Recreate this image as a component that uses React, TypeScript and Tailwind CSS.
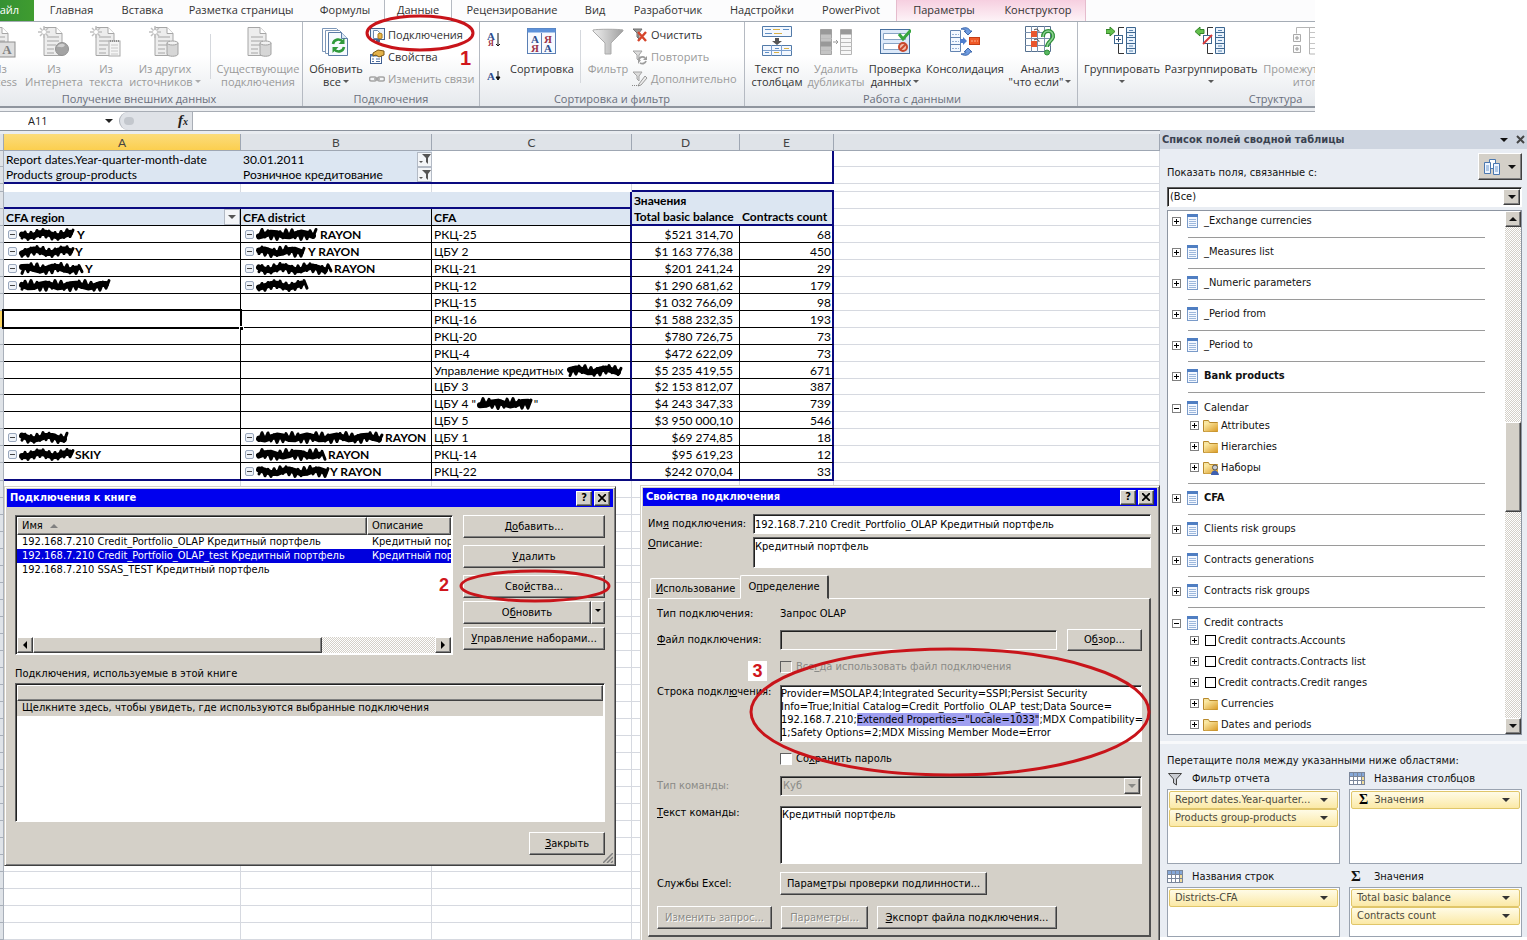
import type { ReactNode } from 'react'

const sources = [
  { kind: 'access', top: 'Из', bottom: 'Access', size: 'w-10 -ml-5' },
  { kind: 'web', top: 'Из', bottom: 'Интернета', size: 'w-[68px]' },
  { kind: 'text', top: 'Из', bottom: 'текста', size: 'w-9' },
  { kind: 'db', top: 'Из других', bottom: 'источников', size: 'w-[82px]', menu: true },
]

const tabs = [
  { name: 'Главная', size: 'w-[75px]' },
  { name: 'Вставка', size: 'w-[67px]' },
  { name: 'Разметка страницы', size: 'w-[130px]' },
  { name: 'Формулы', size: 'w-[78px]' },
  { name: 'Данные', size: 'w-[68px]', active: true },
  { name: 'Рецензирование', size: 'w-[120px]' },
  { name: 'Вид', size: 'w-[46px]' },
  { name: 'Разработчик', size: 'w-[100px]' },
  { name: 'Надстройки', size: 'w-[88px]' },
  { name: 'PowerPivot', size: 'w-[90px]' },
]

type Hidden = { ink: number; tail?: string }
type Row = { region?: Hidden; district?: Hidden; cfa: string; cfaInk?: number; cfaTail?: string; balance: string; count: number; selected?: boolean; short?: boolean }

const rows: Row[] = [
  { region: { ink: 56, tail: 'Y' }, district: { ink: 62, tail: 'RAYON' }, cfa: 'РКЦ-25', balance: '$521 314,70', count: 68 },
  { region: { ink: 54, tail: 'Y' }, district: { ink: 50, tail: 'Y RAYON' }, cfa: 'ЦБУ 2', balance: '$1 163 776,38', count: 450 },
  { region: { ink: 64, tail: 'Y' }, district: { ink: 76, tail: 'RAYON' }, cfa: 'РКЦ-21', balance: '$201 241,24', count: 29 },
  { region: { ink: 92 }, district: { ink: 52 }, cfa: 'РКЦ-12', balance: '$1 290 681,62', count: 179 },
  { cfa: 'РКЦ-15', balance: '$1 032 766,09', count: 98 },
  { cfa: 'РКЦ-16', balance: '$1 588 232,35', count: 193, selected: true },
  { cfa: 'РКЦ-20', balance: '$780 726,75', count: 73 },
  { cfa: 'РКЦ-4', balance: '$472 622,09', count: 73 },
  { cfa: 'Управление кредитных', cfaInk: 56, balance: '$5 235 419,55', count: 671 },
  { cfa: 'ЦБУ 3', balance: '$2 153 812,07', count: 387, short: true },
  { cfa: 'ЦБУ 4 "', cfaInk: 56, cfaTail: '"', balance: '$4 243 347,33', count: 739 },
  { cfa: 'ЦБУ 5', balance: '$3 950 000,10', count: 546 },
  { region: { ink: 50 }, district: { ink: 127, tail: 'RAYON' }, cfa: 'ЦБУ 1', balance: '$69 274,85', count: 18 },
  { region: { ink: 54, tail: 'SKIY' }, district: { ink: 70, tail: 'RAYON' }, cfa: 'РКЦ-14', balance: '$95 619,23', count: 12 },
  { district: { ink: 72, tail: 'Y RAYON' }, cfa: 'РКЦ-22', balance: '$242 070,04', count: 33 },
]

const fields = [
  { name: '_Exchange currencies' },
  { name: '_Measures list' },
  { name: '_Numeric parameters' },
  { name: '_Period from' },
  { name: '_Period to' },
  { name: 'Bank products', bold: true },
  {
    name: 'Calendar',
    children: [
      { name: 'Attributes', kind: 'folder' },
      { name: 'Hierarchies', kind: 'folder' },
      { name: 'Наборы', kind: 'sets' },
    ],
  },
  { name: 'CFA', bold: true },
  { name: 'Clients risk groups' },
  { name: 'Contracts generations' },
  { name: 'Contracts risk groups' },
  {
    name: 'Credit contracts',
    children: [
      { name: 'Credit contracts.Accounts', kind: 'check' },
      { name: 'Credit contracts.Contracts list', kind: 'check' },
      { name: 'Credit contracts.Credit ranges', kind: 'check' },
      { name: 'Currencies', kind: 'folder' },
      { name: 'Dates and periods', kind: 'folder' },
    ],
  },
]

const raised = 'bg-[#d4d0c8] border border-t-white border-l-white border-r-[#404040] border-b-[#404040] shadow-[inset_-1px_-1px_0_#808080]'
const sunken = 'border border-t-[#606060] border-l-[#606060] border-r-white border-b-white shadow-[inset_1px_1px_0_#202020]'

function Caret({ className = '', small }: { className?: string; small?: boolean }) {
  return (
    <svg viewBox="0 0 8 4" className={`inline-block shrink-0 ${small ? 'h-[3px] w-1.5' : 'h-1 w-2'} ${className}`} fill="currentColor">
      <path d="M0 0h8L4 4z" />
    </svg>
  )
}

/* ---------- ribbon icons ---------- */

function SourceIcon({ kind }: { kind: string }) {
  return (
    <svg viewBox="0 0 32 32" className="h-8 w-8" fill="none">
      <path d="M6 1.500h12l6 6V29.500H6z" fill="#ededed" stroke="#a6a6a6" />
      <path d="M18 1.500v6h6" stroke="#a6a6a6" fill="#fff" />
      <path d="M9 11h12M9 15h12M9 19h9M9 23h7M9 27h7" stroke="#bdbdbd" strokeWidth="1.500" />
      {kind !== 'existing' && (
        <>
          <path d="M6 0v12M0 6h12M2 2l8 8M10 2l-8 8" stroke="#c0c0c0" strokeWidth="1.500" />
          <circle cx="6" cy="6" r="2" fill="#fff" />
        </>
      )}
      {kind === 'access' && (
        <>
          <rect x="15" y="16" width="16" height="15" fill="#dedede" stroke="#8f8f8f" />
          <text x="23" y="28" textAnchor="middle" fontSize="13" fontWeight="700" fontFamily="Liberation Serif" fill="#808080">A</text>
        </>
      )}
      {kind === 'web' && (
        <>
          <circle cx="24" cy="23" r="6.500" fill="#a3a3a3" stroke="#919191" />
          <path d="M19 21c2-4 6-4 8-2-2 4-5 1-8 2z" fill="#cfcfcf" />
        </>
      )}
      {kind === 'text' && (
        <>
          <rect x="19" y="15" width="11" height="15" fill="#f5f5f5" stroke="#a8a8a8" />
          <path d="M20 15h10" stroke="#8e8e8e" strokeWidth="2" strokeDasharray="1 1" />
          <path d="M21 19h7M21 22h7M21 25h7M21 28h7" stroke="#c8c8c8" />
        </>
      )}
      {(kind === 'db' || kind === 'existing') && (
        <>
          <path d="M18 17v11c0 3 11 3 11 0V17z" fill="#d6d6d6" stroke="#a2a2a2" />
          <ellipse cx="23.500" cy="17" rx="5.500" ry="2" fill="#f2f2f2" stroke="#a2a2a2" />
        </>
      )}
    </svg>
  )
}

function RefreshIcon() {
  return (
    <svg viewBox="0 0 32 32" className="h-8 w-8" fill="none">
      <path d="M2.500 2.500h14l3 3v20h-17z" fill="#fff" stroke="#7d97b8" />
      <path d="M5.500 4.500h14l3 3v20h-17z" fill="#fff" stroke="#7d97b8" />
      <path d="M8.500 6.500h13l6 6v17h-19z" fill="#f6faff" stroke="#5b7ca6" />
      <path d="M21.500 6.500v6h6" fill="#dce8f6" stroke="#5b7ca6" />
      <path d="M13 18c1-5 7-6 10-2" stroke="#2f9a3b" strokeWidth="2.600" />
      <path d="M24.500 12v6h-6z" fill="#2f9a3b" />
      <path d="M24 21c-1 5-7 6-10 2" stroke="#2f9a3b" strokeWidth="2.600" />
      <path d="M12.500 27v-6h6z" fill="#2f9a3b" />
    </svg>
  )
}

function SmallIcon({ kind }: { kind: string }) {
  return (
    <svg viewBox="0 0 16 16" className="h-4 w-4 shrink-0" fill="none">
      {kind === 'connections' && (
        <>
          <rect x="1.500" y="1.500" width="14" height="11" fill="#e9f1fb" stroke="#47658f" />
          <path d="M4.500 3.500h4l2 2v6h-6z" fill="#fff" stroke="#6c88ad" />
          <path d="M9 7v4c0 1 4 1 4 0V7c0-1-4-1-4 0z" fill="#e9b84a" stroke="#a87718" />
          <path d="M7 13h4v2H7z" fill="#47658f" />
        </>
      )}
      {kind === 'properties' && (
        <>
          <rect x="1.500" y="5.500" width="11" height="9" fill="#fff" stroke="#3f5f92" />
          <rect x="1.500" y="5.500" width="11" height="2" fill="#4f7fc0" />
          <path d="M3 10h2M7 10h4M3 12.500h2M7 12.500h4" stroke="#4f6fa0" />
          <path d="M4 4l5-3 6 1v4l-5 2-3-2-3 1z" fill="#e3b24a" stroke="#7d5713" />
        </>
      )}
      {kind === 'links' && (
        <>
          <rect x="0.500" y="6" width="7" height="4" rx="2" stroke="#a5a5a5" strokeWidth="1.500" />
          <rect x="8.500" y="6" width="7" height="4" rx="2" stroke="#a5a5a5" strokeWidth="1.500" />
          <path d="M5 8h6" stroke="#a5a5a5" strokeWidth="1.500" />
        </>
      )}
      {kind === 'clear' && (
        <>
          <path d="M1 2h9L7 6v6l-2-2V6z" fill="#9a9a9a" stroke="#6e6e6e" />
          <path d="M6 5l8 9M14 5l-8 9" stroke="#d6452b" strokeWidth="2.400" />
        </>
      )}
      {kind === 'reapply' && (
        <>
          <path d="M1 2h9L7 6v6l-2-2V6z" fill="#dcdcdc" stroke="#a4a4a4" />
          <path d="M7 11c0-3 4-4 6-2M14 12c-1 3-4 3-6 2" stroke="#9d9d9d" strokeWidth="1.800" />
          <path d="M15 7v4h-4zM6 15v-4h3z" fill="#9d9d9d" />
        </>
      )}
      {kind === 'advanced' && (
        <>
          <path d="M1 1h9L7 5v5L5 8V5z" fill="#dcdcdc" stroke="#a4a4a4" />
          <path d="M7 13l6-8 2 2-6 7-3 1z" fill="#ececec" stroke="#999" />
          <path d="M0 14.500h7" stroke="#888" strokeDasharray="1 1" />
        </>
      )}
    </svg>
  )
}

function SortIcon() {
  return (
    <svg viewBox="0 0 32 32" className="h-8 w-8" fontFamily="Liberation Serif" fontWeight="700" fontSize="11" textAnchor="middle">
      <rect x="1.500" y="2.500" width="28" height="25" fill="#f7faff" stroke="#5a7fb4" />
      <rect x="1.500" y="2.500" width="28" height="4" fill="#5d92da" />
      <path d="M15.500 7v21" stroke="#5a7fb4" />
      <text x="9" y="17" fill="#2d4d8e">А</text>
      <text x="9" y="26" fill="#9c3448">Я</text>
      <text x="22" y="17" fill="#9c3448">Я</text>
      <text x="22" y="26" fill="#2d4d8e">А</text>
    </svg>
  )
}

function FunnelIcon() {
  return (
    <svg viewBox="0 0 32 32" className="h-8 w-8">
      <defs>
        <linearGradient id="funnel">
          <stop offset="0" stopColor="#efefef" />
          <stop offset="1" stopColor="#a0a0a0" />
        </linearGradient>
      </defs>
      <path d="M1 4c4-1 26-1 30 0v1L19 17v11h-6V17L1 5z" fill="url(#funnel)" stroke="#ababab" />
    </svg>
  )
}

function ToolIcon({ kind }: { kind: string }) {
  return (
    <svg viewBox="0 0 32 32" className="h-8 w-8" fill="none">
      {kind === 'columns' && (
        <>
          <path d="M1.500 0.500h29v10h-29zM1.500 19.500h29v10h-29z" fill="#f3f8ff" stroke="#527aa8" />
          <path d="M4 3.500h6M22 3.500h6M4 7.500h7M14 22.500h4M4 26.500h4" stroke="#5f8fc5" />
          <path d="M12 3.500h7M13 7.500h8M13 26.500h5M23 22.500h5" stroke="#d8b047" />
          <path d="M10.500 19v11M20.500 19v11M2 24.500h29" stroke="#7b9fce" />
          <path d="M14 12h4v3h3l-5 4-5-4h3z" fill="#555" />
        </>
      )}
      {kind === 'duplicates' && (
        <>
          <path d="M0.500 3.500h11v25h-11z" fill="#c4c4c4" stroke="#a5a5a5" />
          <path d="M20.500 3.500h11v25h-11z" fill="#f7f7f7" stroke="#b5b5b5" />
          <path d="M0.500 3.500h11v5h-11zM0.500 15.500h11v5h-11zM20.500 3.500h11v5h-11z" fill="#999" />
          <path d="M1 12.500h11M1 24.500h11M21 12.500h11M21 16.500h11M21 20.500h11M21 24.500h11" stroke="#bbb" />
          <path d="M13 16h5M16 14l2 2-2 2" stroke="#999" />
        </>
      )}
      {kind === 'validation' && (
        <>
          <rect x="1.500" y="3.500" width="29" height="24" fill="#dce9f9" stroke="#4a719f" />
          <path d="M4.500 7.500h22v6h-22zM4.500 17.500h17v6h-17z" fill="#fff" stroke="#86a3c5" />
          <path d="M20 8l4 5 8-9" stroke="#36a63f" strokeWidth="3" />
          <circle cx="24" cy="21" r="4" stroke="#c9492d" strokeWidth="2" fill="#f3c0ae" />
          <path d="M21 24l6-6" stroke="#c9492d" strokeWidth="2" />
        </>
      )}
      {kind === 'consolidate' && (
        <>
          <path d="M1.500 4.500h10v21h-10z" fill="#f3f8ff" stroke="#6384b1" />
          <path d="M1.500 11.500h10M1.500 18.500h10" stroke="#6384b1" />
          <path d="M3 8.500h7M3 15.500h7M3 22.500h7" stroke="#95b0d4" strokeDasharray="2 1" />
          <path d="M12 3c5-3 9 0 9 2h2l-4 4-4-4h2c0-1-2-2-5-2z" fill="#6e9be0" stroke="#3f69ad" />
          <path d="M12 28c5 3 9 0 9-2h2l-4-4-4 4h2c0 1-2 2-5 2z" fill="#6e9be0" stroke="#3f69ad" />
          <path d="M11 13h3v-2l4 4-4 4v-2h-3z" fill="#4d7dce" />
          <rect x="20.500" y="11.500" width="10" height="7" fill="#f05a28" stroke="#c43e15" />
          <path d="M22 15h7" stroke="#fbb08f" strokeDasharray="2 1" />
        </>
      )}
      {kind === 'whatif' && (
        <>
          <path d="M1.500 0.500h25v25h-25z" fill="#fff" stroke="#55708f" />
          <path d="M7.500 0v26M13.500 0v26M20.500 0v26M1 6.500h26M1 12.500h26M1 19.500h26" stroke="#7a90ac" />
          <path d="M7 5h6v6H7zM7 15h6v6H7z" fill="#e9562d" />
          <path d="M10 4c3-2 5 0 5 2M10 14c3-2 5 0 5 2" stroke="#444" />
          <path d="M19 11c0-8 11-8 10 0-1 4-6 5-6 10" stroke="#2e8f38" strokeWidth="4" />
          <path d="M19 11c0-8 11-8 10 0-1 4-6 5-6 10" stroke="#8fd694" strokeWidth="1.500" />
          <circle cx="23" cy="26.500" r="2.500" fill="#58b661" stroke="#2e8f38" />
        </>
      )}
      {(kind === 'group' || kind === 'ungroup') && (
        <>
          <path d="M20.500 1.500h9v26h-9z" fill="#eaf3fc" stroke="#3d668f" />
          <path d="M20 6.500h10M20 11.500h10M20 17.500h10M20 22.500h10" stroke="#3d668f" />
          <path d="M23 4.500h4M23 9.500h4M23 14.500h4M23 20h4M23 25h4" stroke="#5d87b3" />
          <path d="M18 1.500h-5.500v8M12.500 18v9.500H18" stroke="#333" />
          <rect x="8.500" y="9.500" width="8" height="8" fill="#fff" stroke="#3d668f" />
          {kind === 'group' ? (
            <>
              <path d="M12.500 11v5M10 13.500h5" stroke="#34527a" />
              <path d="M0 3.500h4V1l5 4.500-5 4.500V7.500H0z" fill="#63c04c" stroke="#35852a" />
            </>
          ) : (
            <>
              <path d="M8 18l9-9" stroke="#d83a3a" strokeWidth="2" />
              <path d="M9 3.500H5V1L0 5.500 5 10V7.500h4z" fill="#63c04c" stroke="#35852a" />
            </>
          )}
        </>
      )}
      {kind === 'subtotal' && (
        <>
          <path d="M11 1.500h20M17.500 1v27h14M4.500 1.500v6M4.500 1.500H11" stroke="#b5b5b5" />
          <path d="M18 6.500h14M18 11.500h14M18 17.500h14M18 22.500h14M24.500 2v26" stroke="#c5c5c5" />
          <path d="M1.500 8.500h7v7h-7zM1.500 19.500h7v7h-7z" fill="#fafafa" stroke="#aaa" />
          <path d="M5 10v4M3 12h4M5 21v4M3 23h4" stroke="#999" />
        </>
      )}
    </svg>
  )
}

/* ---------- ribbon parts ---------- */

type BigProps = { icon: ReactNode; top: string; bottom?: string; size: string; menu?: boolean; off?: boolean }

function BigButton({ icon, top, bottom, size, menu, off }: BigProps) {
  return (
    <button className={`flex shrink-0 flex-col items-center pt-1 whitespace-nowrap ${size} ${off ? 'text-[#9a9a9a]' : 'text-[#333]'}`}>
      {icon}
      <span className="mt-1 leading-[13px]">{top}</span>
      <span className="flex items-center gap-0.5 leading-[13px]">
        {bottom}
        {menu && <Caret small className="my-[5px] opacity-80" />}
      </span>
    </button>
  )
}

function SmallButton({ kind, label, off }: { kind: string; label: string; off?: boolean }) {
  return (
    <button className={`flex h-[22px] items-center gap-[3px] whitespace-nowrap ${off ? 'text-[#9a9a9a]' : 'text-[#333]'}`}>
      <SmallIcon kind={kind} />
      {label}
    </button>
  )
}

function Group({ title, className, children }: { title: string; className: string; children: ReactNode }) {
  return (
    <section className={`relative flex shrink-0 flex-col border-r border-[#b5bac2] ${className}`}>
      <div className="flex h-[70px]">{children}</div>
      <h2 className="text-center leading-[15px] text-[#6a6f7c]">{title}</h2>
    </section>
  )
}

function Ribbon() {
  return (
    <header className="mr-[212px] overflow-hidden border-b border-[#a8adb5] bg-[#eceef1] pb-[3px] font-['Open_Sans','Noto_Sans',sans-serif] text-[11px]">
      <nav className="flex h-[22px] border-b border-[#a5acb5] bg-[#fcfcfd] text-[#333]">
        <button className="-ml-6 w-[58px] shrink-0 bg-linear-to-r from-[#2f8a36] to-[#3f9c2f] text-white">Файл</button>
        {tabs.map((tab) => (
          <button
            key={tab.name}
            className={`h-[21px] shrink-0 whitespace-nowrap ${tab.size} ${tab.active ? 'border-x border-[#b5bac2] bg-white' : ''}`}
          >
            {tab.name}
          </button>
        ))}
        <div className="flex shrink-0 border-x border-[#e5bccd] bg-linear-to-b from-[#f6cfe0] to-[#fdf3f7]">
          <button className="w-[94px]">Параметры</button>
          <button className="w-[94px]">Конструктор</button>
        </div>
      </nav>
      <div className="flex h-[86px] border-b-2 border-[#8f959e] bg-linear-to-b from-white from-40% to-[#e6e9ed]">
        <Group title="Получение внешних данных" className="w-[303px] [&>h2]:pr-6">
          {sources.map((s) => (
            <BigButton key={s.kind} icon={<SourceIcon kind={s.kind} />} top={s.top} bottom={s.bottom} size={s.size} menu={s.menu} off />
          ))}
          <div className="mx-1 my-3 w-px bg-[#d5d8dd]" />
          <BigButton icon={<SourceIcon kind="existing" />} top="Существующие" bottom="подключения" size="w-[86px]" off />
        </Group>
        <Group title="Подключения" className="w-[177px]">
          <BigButton icon={<RefreshIcon />} top="Обновить" bottom="все" size="w-[66px]" menu />
          <div className="flex flex-col pt-0.5">
            <SmallButton kind="connections" label="Подключения" />
            <SmallButton kind="properties" label="Свойства" />
            <SmallButton kind="links" label="Изменить связи" off />
          </div>
          <svg viewBox="0 0 110 38" className="pointer-events-none absolute -top-2 left-[62px] h-[38px] w-[110px]" fill="none">
            <ellipse cx="55" cy="19" rx="53" ry="17" stroke="#c8141a" strokeWidth="3" />
          </svg>
          <b className="absolute top-6 left-[157px] font-['Liberation_Sans',sans-serif] text-xl leading-6 text-[#d0161c]">1</b>
        </Group>
        <Group title="Сортировка и фильтр" className="w-[265px]">
          <div className="flex w-7 flex-col items-center gap-5 pt-2.5 font-['Liberation_Serif',serif] font-bold text-[#2d4d8e]">
            <button className="flex h-4 items-center" aria-label="От А до Я">
              <span className="flex flex-col leading-2">А<span className="text-[8px] text-[#9c3448]">Я</span></span>
              <svg viewBox="0 0 6 14" className="h-3.5 w-1.5" stroke="#111" fill="none"><path d="M3 0v13M1 11l2 2 2-2" /></svg>
            </button>
            <button className="flex h-4 items-center" aria-label="От Я до А">
              А
              <svg viewBox="0 0 6 10" className="h-2.5 w-1.5" stroke="#111" fill="#111"><path d="M3 0v9M1 6h4L3 9z" /></svg>
            </button>
          </div>
          <BigButton icon={<SortIcon />} top="Сортировка" size="w-[68px]" />
          <div className="mx-1 my-2 w-px bg-[#d5d8dd]" />
          <BigButton icon={<FunnelIcon />} top="Фильтр" size="w-[46px]" off />
          <div className="flex flex-col pt-0.5 pl-px">
            <SmallButton kind="clear" label="Очистить" />
            <SmallButton kind="reapply" label="Повторить" off />
            <SmallButton kind="advanced" label="Дополнительно" off />
          </div>
        </Group>
        <Group title="Работа с данными" className="w-[333px] pl-0.5">
          <BigButton icon={<ToolIcon kind="columns" />} top="Текст по" bottom="столбцам" size="w-[60px]" />
          <BigButton icon={<ToolIcon kind="duplicates" />} top="Удалить" bottom="дубликаты" size="w-[58px]" off />
          <BigButton icon={<ToolIcon kind="validation" />} top="Проверка" bottom="данных" size="w-[60px]" menu />
          <BigButton icon={<ToolIcon kind="consolidate" />} top="Консолидация" size="w-20" />
          <BigButton icon={<ToolIcon kind="whatif" />} top="Анализ" bottom={'"что если"'} size="w-[70px]" menu />
        </Group>
        <Group title="Структура" className="w-[392px] pl-1">
          <BigButton icon={<ToolIcon kind="group" />} top="Группировать" size="w-20" menu />
          <BigButton icon={<ToolIcon kind="ungroup" />} top="Разгруппировать" size="w-[98px]" menu />
          <BigButton icon={<ToolIcon kind="subtotal" />} top="Промежуточные" bottom="итоги" size="w-24" off />
        </Group>
      </div>
    </header>
  )
}

function FormulaBar() {
  return (
    <div className="mr-[367px] flex h-[18px] items-center bg-white font-['Open_Sans','Noto_Sans',sans-serif] text-[11px] text-[#222]">
      <input aria-label="Имя" defaultValue="A11" className="w-[105px] pl-7" />
      <Caret />
      <div className="ml-1.5 flex h-full w-[73px] items-center justify-between rounded-l-full border-l border-[#a9aeb6] bg-[#dfe2e7] pr-1">
        <span className="ml-1 h-2 w-2.5 rounded-full bg-[#c3c7cd]" />
        <i className="font-['Liberation_Serif',serif] text-[15px] leading-4 font-bold">f<small className="text-[10px]">x</small></i>
      </div>
      <input aria-label="Строка формул" className="h-full flex-1 border-l border-[#a9aeb6]" />
    </div>
  )
}

/* ---------- worksheet ---------- */

function Ink({ width, seed }: { width: number; seed: number }) {
  const wave = Array.from({ length: Math.floor(width / 3) }, (_, i) => {
    const drift = Math.sin(i * 0.7 + seed) * 1.500
    return `${i === 0 ? 'M' : 'L'}${3 + i * 3} ${(i % 2 ? 3 : 10) + drift}`
  }).join('')
  const line = Array.from({ length: Math.floor(width / 6) }, (_, i) => `${i === 0 ? 'M' : 'L'}${3 + i * 6} ${6.500 + Math.sin(i * 1.300 + seed * 2) * 2}`).join('')
  return (
    <svg width={width} height="13" className="inline-block shrink-0 overflow-visible" fill="none" stroke="#000" strokeLinejoin="round" strokeLinecap="round">
      <path d={wave} strokeWidth="3" />
      <path d={line} strokeWidth="6" />
    </svg>
  )
}

function HiddenCell({ value, seed }: { value?: Hidden; seed: number }) {
  if (!value) return null
  return (
    <div className="flex h-4 items-center gap-0.5 pl-1 font-bold">
      <button aria-label="Свернуть" className="flex h-[9px] w-[9px] shrink-0 items-center justify-center rounded-xs border border-[#9aa8bd] bg-[#eef2f8]">
        <span className="h-px w-[5px] bg-[#444]" />
      </button>
      <Ink width={value.ink} seed={seed} />
      {value.tail}
    </div>
  )
}

function FilterButton() {
  return (
    <button aria-label="Фильтр" className="flex h-[15px] w-[15px] items-center justify-center border border-[#b3bac5] bg-[#f3f5f8]">
      <svg viewBox="0 0 12 12" className="h-3 w-3" fill="#555">
        <path d="M3 1h9L9 5v6L7 9V5zM0 8h4L2 10z" />
      </svg>
    </button>
  )
}

function Strip({ active }: { active?: boolean }) {
  return <td className={`border-r border-b border-[#a9b0ba] ${active ? 'bg-[#fbd560]' : 'bg-[#dfe3e8]'}`} />
}

const grid = 'border-r border-b border-[#d6d9e0]'
const navyB = 'border-b-2 border-b-[#0a0a80]'
const navyR = 'border-r-2 border-r-[#0a0a80]'

function Sheet() {
  return (
    <table className="w-full table-fixed border-separate border-spacing-0 font-['Lato','Noto_Sans',sans-serif] text-[12px] leading-[15px] text-black [&_td]:p-0 [&_td]:whitespace-nowrap">
      <colgroup>
        <col className="w-1" />
        <col className="w-[237px]" />
        <col className="w-[191px]" />
        <col className="w-[200px]" />
        <col className="w-[108px]" />
        <col className="w-[94px]" />
        <col />
      </colgroup>
      <thead>
        <tr className="h-[17px] bg-[#dfe3e8] text-[#444] [&>th]:border-r [&>th]:border-b [&>th]:border-[#9fa7b3] [&>th]:p-0 [&>th]:font-normal">
          <th />
          <th className="bg-linear-to-b from-[#fbdc7a] to-[#fccf4e]">A</th>
          <th>B</th>
          <th>C</th>
          <th>D</th>
          <th>E</th>
          <th />
        </tr>
      </thead>
      <tbody>
        <tr className="h-4">
          <Strip />
          <td className="bg-[#dce6f2]"><div className="pl-0.5">Report dates.Year-quarter-month-date</div></td>
          <td className="bg-[#dce6f2]"><div className="flex justify-between pl-0.5">30.01.2011<FilterButton /></div></td>
          <td /><td />
          <td className={navyR} />
          <td className={grid} />
        </tr>
        <tr className="h-[17px]">
          <Strip />
          <td className={`bg-[#dce6f2] ${navyB}`}><div className="pl-0.5">Products group-products</div></td>
          <td className={`bg-[#dce6f2] ${navyB}`}><div className="flex justify-between pl-0.5">Розничное кредитование<FilterButton /></div></td>
          <td className={navyB} />
          <td className={navyB} />
          <td className={`${navyB} ${navyR}`} />
          <td className={grid} />
        </tr>
        <tr className="h-2 text-[0px] leading-0">
          <Strip />
          <td className="border-r border-[#d6d9e0]" />
          <td className="border-r border-[#d6d9e0]" />
          <td className="border-r border-[#d6d9e0]" />
          <td className={navyB} />
          <td className={navyB} />
          <td className={grid} />
        </tr>
        <tr className="h-[17px] bg-[#dce6f2] font-bold">
          <Strip />
          <td className={navyB} />
          <td className={navyB} />
          <td className={`${navyB} ${navyR}`} />
          <td><div className="pl-0.5">Значения</div></td>
          <td className={navyR} />
          <td className={`${grid} bg-white`} />
        </tr>
        <tr className="h-[17px] bg-[#dce6f2] font-bold">
          <Strip />
          <td className="border-r border-b border-black">
            <div className="flex items-center justify-between pl-0.5">
              CFA region
              <button aria-label="Фильтр CFA region" className="flex h-4 w-4 items-center justify-center border border-[#b3bac5] bg-[#f3f5f8] text-[#555]"><Caret /></button>
            </div>
          </td>
          <td className="border-r border-b border-black"><div className="pl-0.5">CFA district</div></td>
          <td className={`border-b border-b-black ${navyR}`}><div className="pl-0.5">CFA</div></td>
          <td className={navyB}><div className="pl-0.5">Total basic balance</div></td>
          <td className={`${navyB} ${navyR}`}><div className="pl-0.5">Contracts count</div></td>
          <td className={`${grid} bg-white`} />
        </tr>
        {rows.map((row, i) => {
          const bottom = i === rows.length - 1 ? navyB : 'border-b border-b-black'
          return (
            <tr key={row.cfa} className={row.short ? 'h-4' : 'h-[17px]'}>
              <Strip active={row.selected} />
              <td className={`relative border-r border-r-black ${bottom}`}>
                <HiddenCell value={row.region} seed={i} />
                {row.selected && (
                  <div className="absolute -inset-0.5 border-2 border-black">
                    <span className="absolute -right-1 -bottom-1 h-[5px] w-[5px] border border-white bg-black" />
                  </div>
                )}
              </td>
              <td className={`border-r border-r-black ${bottom}`}><HiddenCell value={row.district} seed={i + 4} /></td>
              <td className={`${bottom} ${navyR}`}>
                <div className="flex h-[15px] items-center gap-px pl-0.5">
                  <span className={row.cfaInk && !row.cfaTail ? 'pr-0.5' : ''}>{row.cfa}</span>
                  {row.cfaInk && <Ink width={row.cfaInk} seed={i} />}
                  {row.cfaTail}
                </div>
              </td>
              <td className={`border-r border-r-black text-right ${bottom}`}><div className="pr-1.5">{row.balance}</div></td>
              <td className={`text-right ${bottom} ${navyR}`}><div className="pr-px">{row.count}</div></td>
              <td className={grid} />
            </tr>
          )
        })}
        {Array.from({ length: 27 }, (_, i) => (
          <tr key={i} className="h-[17px]">
            <Strip />
            <td className={grid} />
            <td className={grid} />
            <td className={grid} />
            <td className={grid} />
            <td className={grid} />
            <td className={grid} />
          </tr>
        ))}
      </tbody>
    </table>
  )
}

/* ---------- dialogs ---------- */

function WinButton({ className = '', off, children }: { className?: string; off?: boolean; children: ReactNode }) {
  return (
    <button disabled={off} className={`${raised} flex items-center justify-center whitespace-nowrap ${off ? 'text-[#8a8a86] [text-shadow:1px_1px_0_white]' : ''} ${className}`}>
      <span>{children}</span>
    </button>
  )
}

function TitleBar({ title }: { title: string }) {
  return (
    <div className="flex h-[18px] items-center gap-0.5 bg-[#0000ee] pr-[3px] pl-[3px] text-white">
      <h2 className="flex-1 font-bold">{title}</h2>
      <button aria-label="Справка" className={`${raised} flex h-[15px] w-4 items-center justify-center font-bold text-black`}>?</button>
      <button aria-label="Закрыть окно" className={`${raised} flex h-[15px] w-4 items-center justify-center`}>
        <svg viewBox="0 0 8 8" className="h-2 w-2" stroke="#000" strokeWidth="1.800"><path d="M0 0l8 8M8 0L0 8" /></svg>
      </button>
    </div>
  )
}

const connections = [
  { name: '192.168.7.210 Credit_Portfolio_OLAP Кредитный портфель', about: 'Кредитный портфель' },
  { name: '192.168.7.210 Credit_Portfolio_OLAP_test Кредитный портфель', about: 'Кредитный портфель', selected: true },
  { name: '192.168.7.210 SSAS_TEST Кредитный портфель', about: '' },
]

const hatch = 'bg-[repeating-conic-gradient(#d4d0c8_0_25%,#ffffff_0_50%)] bg-[length:2px_2px]'
const windowFrame = "absolute border border-[#d4d0c8] border-r-[#404040] border-b-[#404040] bg-[#d4d0c8] p-0.5 font-['DejaVu_Sans_Condensed','DejaVu_Sans',sans-serif] text-[11px] leading-[14px] text-black shadow-[inset_1px_1px_0_white,inset_-1px_-1px_0_#808080]"

function ConnectionsDialog() {
  return (
    <div role="dialog" aria-label="Подключения к книге" className={`${windowFrame} top-[355px] left-1 w-[612px]`}>
      <TitleBar title="Подключения к книге" />
      <div className="px-2 pt-2 pb-2">
        <div className="flex gap-2.5">
          <div className={`${sunken} flex min-w-0 flex-1 flex-col bg-white p-px`}>
            <table className="w-full table-fixed border-separate border-spacing-0 text-left whitespace-nowrap">
              <thead>
                <tr className="h-[18px]">
                  <th className={`${raised} p-0 pl-1 font-normal`}>Имя <Caret className="ml-1 rotate-180 text-[#808080]" /></th>
                  <th className={`${raised} w-[84px] p-0 pl-1 font-normal`}>Описание</th>
                </tr>
              </thead>
              <tbody>
                {connections.map((c) => (
                  <tr key={c.name} className={c.selected ? 'bg-[#0000dd] text-white' : ''}>
                    <td className="overflow-hidden p-0 pl-[5px]">{c.name}</td>
                    <td className="overflow-hidden p-0 pl-[5px]">{c.about}</td>
                  </tr>
                ))}
              </tbody>
            </table>
            <div className={`mt-auto flex h-4 ${hatch}`}>
              <button aria-label="Влево" className={`${raised} flex w-4 items-center justify-center`}><Caret className="rotate-90" /></button>
              <div className={`${raised} w-[289px]`} />
              <button aria-label="Вправо" className={`${raised} ml-auto flex w-4 items-center justify-center`}><Caret className="-rotate-90" /></button>
            </div>
          </div>
          <div className="flex w-[142px] flex-col gap-[3px]">
            <WinButton className="mb-1 h-[23px]">Д<u>о</u>бавить...</WinButton>
            <WinButton className="mb-1 h-[23px]"><u>У</u>далить</WinButton>
            <div className="relative">
              <WinButton className="h-[23px] w-full">Сво<u>й</u>ства...</WinButton>
              <svg viewBox="0 0 152 34" className="pointer-events-none absolute -top-1.5 -left-1 h-[34px] w-[152px]" fill="none">
                <ellipse cx="76" cy="17" rx="74" ry="15" stroke="#c8141a" strokeWidth="3" />
              </svg>
              <b className="absolute top-0 right-[156px] font-['Liberation_Sans',sans-serif] text-lg leading-5 text-[#d0161c]">2</b>
            </div>
            <div className="flex">
              <WinButton className="h-[23px] flex-1">О<u>б</u>новить</WinButton>
              <WinButton className="h-[23px] w-3.5"><Caret small className="mb-1" /></WinButton>
            </div>
            <WinButton className="h-[23px]"><u>У</u>правление наборами...</WinButton>
            <div className="h-0.5" />
          </div>
        </div>
        <p className="mt-3 mb-0.5">Подключения, используемые в этой книге</p>
        <div className={`${sunken} h-[139px] bg-white p-px`}>
          <div className={`${raised} h-4`} />
          <div className="h-[15px] bg-[#d4d0c8] pl-[5px]">Щелкните здесь, чтобы увидеть, где используются выбранные подключения</div>
        </div>
        <div className="mt-2.5 flex justify-end">
          <WinButton className="h-[23px] w-[76px]"><u>З</u>акрыть</WinButton>
        </div>
      </div>
      <svg viewBox="0 0 10 10" className="absolute right-0.5 bottom-0.5 h-2.5 w-2.5" stroke="#808080" strokeWidth="1.500">
        <path d="M0 10L10 0M4 10l6-6M8 10l2-2" />
      </svg>
    </div>
  )
}

const panelRow = 'grid grid-cols-[123px_minmax(0,1fr)]'
const tick = 'h-3 w-3 shrink-0 appearance-none border border-t-[#606060] border-l-[#606060] border-r-white border-b-white'

function PropertiesDialog() {
  return (
    <div role="dialog" aria-label="Свойства подключения" className={`${windowFrame} top-[354px] right-0 w-[520px] pl-0.5`}>
      <TitleBar title="Свойства подключения" />
      <div className="pt-2 pr-1.5 pb-3 pl-[5px]">
        <div className="grid grid-cols-[105px_1fr] gap-y-[3px]">
          <label htmlFor="conn-name" className="pt-[3px]">Им<u>я</u> подключения:</label>
          <input id="conn-name" defaultValue="192.168.7.210 Credit_Portfolio_OLAP Кредитный портфель" className={`${sunken} h-5 bg-white pl-px`} />
          <label htmlFor="conn-about"><u>О</u>писание:</label>
          <textarea id="conn-about" defaultValue="Кредитный портфель" className={`${sunken} h-[31px] resize-none bg-white pt-0.5 pl-px`} />
        </div>
        <div role="tablist" className="mt-[7px] flex h-[23px] items-end pl-0.5">
          <button role="tab" className="h-5 w-[90px] rounded-t-xs border-t border-l border-white"><u>И</u>спользование</button>
          <button role="tab" aria-selected="true" className="z-10 -mb-px h-6 w-[89px] rounded-t-xs border border-white border-r-2 border-r-[#404040] border-b-[#d4d0c8] bg-[#d4d0c8]">О<u>п</u>ределение</button>
        </div>
        <div className="relative border border-t-white border-r-2 border-b-2 border-l-white border-r-[#505050] border-b-[#505050] pr-[7px] pb-[6px] pl-2">
          <div className={`${panelRow} h-[30px] items-center`}>
            <span>Тип подключения:</span>
            <span>Запрос OLAP</span>
          </div>
          <div className={`${panelRow} items-center`}>
            <label htmlFor="conn-file"><u>Ф</u>айл подключения:</label>
            <div className="flex items-center gap-2.5">
              <input id="conn-file" readOnly className={`${sunken} h-5 min-w-0 flex-1`} />
              <WinButton className="h-[22px] w-[75px]">О<u>б</u>зор...</WinButton>
            </div>
          </div>
          <label className="mt-[9px] ml-[123px] flex h-3.5 items-center gap-1 text-[#8a8a86]">
            <input type="checkbox" disabled className={tick} />
            <span>Все<u>г</u>да использовать файл подключения</span>
          </label>
          <div className={`${panelRow} mt-[11px]`}>
            <span id="conn-string-label">Строка подкл<u>ю</u>чения:</span>
            <div role="textbox" aria-multiline="true" aria-labelledby="conn-string-label" tabIndex={0} className={`${sunken} h-[57px] bg-white pt-px leading-[13px] whitespace-nowrap`}>
              Provider=MSOLAP.4;Integrated Security=SSPI;Persist Security<br />
              Info=True;Initial Catalog=Credit_Portfolio_OLAP_test;Data Source=<br />
              192.168.7.210;<mark className="bg-[#9f9ff0] text-black">Extended Properties="Locale=1033"</mark>;MDX Compatibility=<br />
              1;Safety Options=2;MDX Missing Member Mode=Error
            </div>
          </div>
          <label className="mt-2.5 ml-[123px] flex h-3.5 items-center gap-1">
            <input type="checkbox" className={`${tick} bg-white`} />
            <span>Со<u>х</u>ранить пароль</span>
          </label>
          <div className={`${panelRow} mt-2.5 items-center text-[#8a8a86]`}>
            <label htmlFor="cmd-type">Тип команды:</label>
            <div className={`${sunken} relative h-5`}>
              <select id="cmd-type" disabled className="h-full w-full appearance-none pl-0.5">
                <option>Куб</option>
              </select>
              <span className={`${raised} pointer-events-none absolute inset-y-px right-px flex w-4 items-center justify-center`}><Caret /></span>
            </div>
          </div>
          <div className={`${panelRow} mt-2.5`}>
            <label htmlFor="cmd-text"><u>Т</u>екст команды:</label>
            <textarea id="cmd-text" defaultValue="Кредитный портфель" className={`${sunken} h-[58px] resize-none bg-white pt-px pl-px`} />
          </div>
          <div className={`${panelRow} mt-2 items-center`}>
            <span>Службы Excel:</span>
            <WinButton className="h-[23px] w-[207px]">Парам<u>е</u>тры проверки подлинности...</WinButton>
          </div>
          <div className="mt-[11px] flex gap-[9px]">
            <WinButton off className="h-[23px] w-[115px]">Изменить запрос...</WinButton>
            <WinButton off className="h-[23px] w-[87px]">Параметры...</WinButton>
            <WinButton className="h-[23px] w-[180px]"><u>Э</u>кспорт файла подключения...</WinButton>
          </div>
          <svg viewBox="0 0 402 130" className="pointer-events-none absolute top-[48px] left-[100px] h-[130px] w-[402px]" fill="none">
            <ellipse cx="201" cy="65" rx="199" ry="63" stroke="#c8141a" strokeWidth="3" />
          </svg>
          <b className="absolute top-[62px] left-[99px] w-[19px] bg-white text-center font-['Liberation_Sans',sans-serif] text-lg leading-5 text-[#d0161c]">3</b>
        </div>
      </div>
    </div>
  )
}

/* ---------- field list ---------- */

function Expander({ open }: { open?: boolean }) {
  return (
    <button aria-label={open ? 'Свернуть' : 'Развернуть'} className="flex h-[9px] w-[9px] shrink-0 items-center justify-center border border-[#808080] bg-white">
      <svg viewBox="0 0 5 5" className="h-[5px] w-[5px]" stroke="#000">
        <path d={open ? 'M0 2.500h5' : 'M0 2.500h5M2.500 0v5'} />
      </svg>
    </button>
  )
}

function TableIcon() {
  return (
    <svg viewBox="0 0 11 14" className="h-3.5 w-[11px] shrink-0">
      <rect x="0.500" y="0.500" width="10" height="13" fill="#f4f8ff" stroke="#7a9bc9" />
      <path d="M0 0h11v3H0z" fill="#4f7ec2" />
      <path d="M2 5.500h7M2 7.500h7M2 9.500h7M2 11.500h7" stroke="#9db8dc" />
    </svg>
  )
}

function FolderIcon({ sets }: { sets?: boolean }) {
  return (
    <svg viewBox="0 0 16 15" className="h-[15px] w-4 shrink-0">
      <defs>
        <linearGradient id="folder" x2="1" y2="1">
          <stop offset="0" stopColor="#fff0ae" />
          <stop offset="1" stopColor="#d99a25" />
        </linearGradient>
      </defs>
      <path d="M0.500 2.500h5l1 2h8v9h-14z" fill="#f6e4a0" stroke="#b8892b" />
      <path d="M1.500 5h13.500v8.500H1.500z" fill="url(#folder)" />
      {sets && (
        <>
          <path d="M8 15c0-6 7-6 8 0z" fill="#3e5fb0" />
          <circle cx="12" cy="7.500" r="2.500" fill="#c9ccd3" stroke="#555" />
        </>
      )}
    </svg>
  )
}

function GridIcon() {
  return (
    <svg viewBox="0 0 16 13" className="h-[13px] w-4">
      <rect x="0.500" y="0.500" width="15" height="12" fill="#fff" stroke="#7a869a" />
      <path d="M1 1h14v3H1z" fill="#86a8d8" />
      <path d="M12 4h3v8h-3z" fill="#f1dc9a" />
      <path d="M4.500 0v13M8.500 0v13M12.500 0v13M0 4.500h16M0 8.500h16" stroke="#7a869a" />
    </svg>
  )
}

function Area({ title, icon, items }: { title: string; icon: ReactNode; items: { name: string; sum?: boolean }[] }) {
  return (
    <section className="flex min-w-0 flex-1 flex-col">
      <h3 className="flex h-[21px] items-center">
        <span className="w-[25px]">{icon}</span>
        {title}
      </h3>
      <div className="flex-1 border border-[#9aa3b0] bg-white p-px">
        {items.map((item) => (
          <button
            key={item.name}
            className="flex h-[18px] w-full items-center rounded-xs border border-[#e0c66a] bg-linear-to-b from-[#fffbe6] to-[#fbe9a6] px-[5px] text-left whitespace-nowrap text-[#4c4a3c]"
          >
            {item.sum && <b className="mr-1.5 ml-0.5 font-['Liberation_Serif',serif] text-sm leading-4 text-black">Σ</b>}
            <span className="flex-1">{item.name}</span>
            <Caret className="mr-1 text-[#333]" />
          </button>
        ))}
      </div>
    </section>
  )
}

function FieldList() {
  return (
    <aside className="flex w-[367px] shrink-0 flex-col bg-[#e9edf3] font-['DejaVu_Sans_Condensed','DejaVu_Sans',sans-serif] text-[11px] leading-[14px] text-[#111]">
      <div className="flex h-[19px] items-center gap-2 bg-[#ced5e0] pr-0.5 pl-0.5">
        <h2 className="flex-1 font-bold text-[#3a4250]">Список полей сводной таблицы</h2>
        <Caret />
        <button aria-label="Закрыть список полей">
          <svg viewBox="0 0 9 9" className="h-[9px] w-[9px]" stroke="#444" strokeWidth="2"><path d="M1 1l7 7M8 1L1 8" /></svg>
        </button>
      </div>
      <div className="flex flex-col pr-[5px] pl-[7px]">
        <div className="mt-1 flex items-end justify-between">
          <label htmlFor="related">Показать поля, связанные с:</label>
          <button aria-label="Вид списка" className={`${raised} flex h-[27px] w-11 items-center justify-center gap-2`}>
            <svg viewBox="0 0 16 16" className="h-4 w-4">
              <path d="M5.500 0.500h6v9h-6z" fill="#fff" stroke="#4b78b0" />
              <path d="M9.500 4.500h6v11h-6zM0.500 3.500h6v11h-6z" fill="#eef5ff" stroke="#4b78b0" />
              <path d="M2 7h3M2 9h3M2 11h3M11 8h3M11 10h3M11 12h3" stroke="#6e9bd0" />
            </svg>
            <Caret />
          </button>
        </div>
        <div className={`${sunken} relative mt-[7px] h-5 bg-white`}>
          <select id="related" className="h-full w-full appearance-none pl-0.5">
            <option>(Все)</option>
          </select>
          <span className={`${raised} pointer-events-none absolute inset-y-px right-px flex w-[17px] items-center justify-center`}><Caret /></span>
        </div>
        <div className="mt-[3px] flex h-[525px] border border-[#8d95a1] bg-white">
          <ul className="flex-1 overflow-hidden pl-1">
            {fields.map((f, i) => (
              <li key={f.name}>
                <div className={`flex items-center ${f.children ? 'h-[22px] pt-2' : i === 0 ? 'h-[26px] pb-1.5' : 'h-[30px] pb-0.5'} ${f.bold ? 'font-bold' : ''}`}>
                  <Expander open={!!f.children} />
                  <span className="mr-1.5 ml-1.5 flex"><TableIcon /></span>
                  {f.name}
                </div>
                {f.children?.map((c) => (
                  <div key={c.name} className="flex h-[21px] items-center pl-[18px]">
                    <Expander />
                    {c.kind === 'check' ? (
                      <label className="ml-1.5 flex items-center gap-0.5">
                        <input type="checkbox" className="h-[11px] w-[11px] appearance-none border border-black bg-white" />
                        {c.name}
                      </label>
                    ) : (
                      <span className="ml-1 flex items-center gap-0.5">
                        <FolderIcon sets={c.kind === 'sets'} />
                        {c.name}
                      </span>
                    )}
                  </div>
                ))}
                <div className={`mr-5 ml-4 h-px bg-[#9a9a9a] ${f.children ? 'mt-[5px]' : ''}`} />
              </li>
            ))}
          </ul>
          <div className={`flex w-4 flex-col ${hatch}`}>
            <button aria-label="Вверх" className={`${raised} flex h-4 items-center justify-center`}><Caret className="rotate-180" /></button>
            <div className={`${raised} mt-[195px] h-[90px]`} />
            <button aria-label="Вниз" className={`${raised} mt-auto flex h-4 items-center justify-center`}><Caret /></button>
          </div>
        </div>
      </div>
      <div className="mt-1.5 h-[3px] bg-[#f8f9fb]" />
      <div className="pr-[5px] pl-[7px]">
        <p className="mt-2.5">Перетащите поля между указанными ниже областями:</p>
        <div className="flex h-[96px] gap-[9px]">
          <Area
            title="Фильтр отчета"
            icon={<svg viewBox="0 0 16 14" className="h-3.5 w-4" fill="#c9ccd2" stroke="#444"><path d="M1.500 1.500h13L9.500 7v6l-3-2V7z" /></svg>}
            items={[{ name: 'Report dates.Year-quarter...' }, { name: 'Products group-products' }]}
          />
          <Area title="Названия столбцов" icon={<GridIcon />} items={[{ name: 'Значения', sum: true }]} />
        </div>
        <div className="mt-0.5 flex h-[71px] gap-[9px]">
          <Area title="Названия строк" icon={<GridIcon />} items={[{ name: 'Districts-CFA' }]} />
          <Area
            title="Значения"
            icon={<b className="pl-0.5 font-['Liberation_Serif',serif] text-[15px]">Σ</b>}
            items={[{ name: 'Total basic balance' }, { name: 'Contracts count' }]}
          />
        </div>
      </div>
      <div className="flex-1 bg-white" />
    </aside>
  )
}

export default function App() {
  return (
    <div className="flex min-h-screen flex-col overflow-hidden bg-white">
      <Ribbon />
      <FormulaBar />
      <div className="flex flex-1">
        <main className="relative min-w-0 flex-1 overflow-hidden border-t border-[#8b929c] bg-white">
          <div className="h-[3px] bg-[#e9ecf0]" />
          <Sheet />
          <ConnectionsDialog />
          <PropertiesDialog />
        </main>
        <FieldList />
      </div>
    </div>
  )
}
